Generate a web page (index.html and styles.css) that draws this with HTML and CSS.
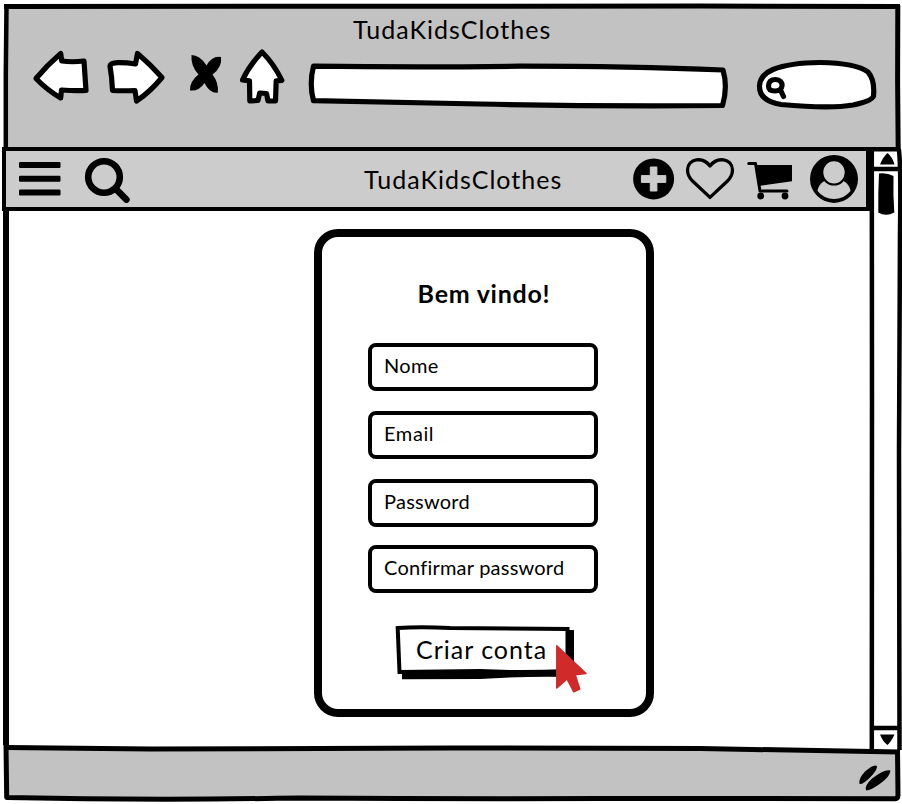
FILE: index.html
```html
<!DOCTYPE html>
<html lang="pt">
<head>
<meta charset="utf-8">
<title>TudaKidsClothes</title>
<link rel="stylesheet" href="styles.css">
</head>
<body>
<div class="window">
  <header class="chrome">
    <svg class="chrome-frame" viewBox="0 0 902 150" aria-hidden="true">
      <path d="M6 6.5 L897.5 6.5 L898 149 L6 149Z" fill="#c2c2c2"/>
      <path d="M4 6.5 L300 6.3 L700 6 L900 6.5" class="line5"/>
      <path d="M6.5 5 L5.8 75 L5.8 150" class="line4"/>
      <path d="M897.8 5 L897.6 80 L898.2 150" class="line5"/>
    </svg>
    <div class="window-title">TudaKidsClothes</div>
    <div class="toolbar">
      <svg class="back" width="60" height="64" viewBox="32 46 60 64"><path class="sketch" d="M36 78.500Q47 65 60.700 53.400L61.700 61Q72 62.500 84 61Q85 76 86 90.500Q74 91 61.500 90L60.700 98Q47 90 36 78.500Z"/></svg>
      <svg class="forward" width="64" height="64" viewBox="104 46 64 64"><path class="sketch" d="M110 66Q110.500 63 118 62.700Q126 62.500 135.500 64L137.500 53.500Q151 65 162 77.500Q150 92 136.500 101L135 90.500Q122 91 112.500 90.500Q112 77 110 66Z"/></svg>
      <svg class="stop" width="40" height="64" viewBox="186 46 40 64"><path d="M191.500 55Q200 55 206.500 65.500Q212 55.500 221 57Q222.500 67 212.500 74.500Q219 83 217.800 92.800Q209.500 93.500 204.500 83Q199 91.500 190 90.500Q189.500 81.500 198.500 74.500Q190.500 66 191.500 55Z"/></svg>
      <svg class="home" width="52" height="64" viewBox="236 46 52 64"><path class="sketch" d="M262 52Q274 64 281.800 80.300L276.200 80.800L275.500 101L268 101L266.500 93.500L259.700 93L258 100.500L249.800 100.800L249.500 80.800L242.500 80Q249 66 262 52Z"/></svg>
      <svg class="address" width="424" height="64" viewBox="306 46 424 64"><path class="sketch" d="M313.500 66.200Q420 67.500 520 66.200Q630 66.200 723 70Q728 87 722.500 105.500Q600 106.500 480 104L313.500 100.700Q309 84 313.500 66.200Z"/></svg>
      <svg class="search" width="126" height="64" viewBox="754 46 126 64"><path class="sketch" d="M773 69.500Q790 62.700 820 62.500Q856 63 868 72Q875 80 873.500 96Q872 101 853 105Q830 109 781 104.500Q759 101 759.500 86Q760 75 773 69.500Z"/><path class="sketch" d="M775.500 79.500C780 79.500 782.500 82.500 782 86C781.500 89.500 779.500 91 775 91C770.500 91 768.500 89.500 768.500 86C768.500 82 771 79.500 775.500 79.500ZM781 91L783.500 96.500"/></svg>
    </div>
  </header>

  <div class="viewport">
    <main class="content">
      <nav class="navbar">
        <svg class="menu" width="44" height="56" viewBox="18 151 44 56"><rect x="19" y="162" width="41.500" height="6" rx="1.200"/><rect x="19" y="175.700" width="41.500" height="6" rx="1.200"/><rect x="19" y="189.500" width="41.500" height="6" rx="1.200"/></svg>
        <svg class="find" width="46" height="56" viewBox="85 151 46 56"><circle cx="104" cy="177" r="15.800" fill="none" stroke="#000" stroke-width="6.600"/><path d="M116 189.200L126.400 199.600" stroke="#000" stroke-width="6.600" stroke-linecap="round"/></svg>
        <span class="brand">TudaKidsClothes</span>
        <div class="actions">
          <svg width="42" height="56" viewBox="633 151 42 56"><circle cx="653.600" cy="178.900" r="20.500"/><path d="M650.300 167h6.600v8.600h8.900v6.800h-8.900v8.600h-6.600v-8.600h-8.900v-6.800h8.900Z" fill="#ccc" stroke="#ccc" stroke-width="1" stroke-linejoin="round"/></svg>
          <svg class="heart" width="49" height="56" viewBox="686 151 49 56"><path d="M710 197.400L692.500 181Q687.500 176 687.500 170C688 158 703 156.500 710 166C717 156.500 732 158 732.500 170Q732.500 176 727.500 181Z" fill="none" stroke="#000" stroke-width="3.300" stroke-linejoin="round"/></svg>
          <svg class="cart" width="46" height="56" viewBox="747 151 46 56"><path d="M756 165H792V181.300L760 185.700Z"/><path d="M748.700 163.500H755.500L760 191H787" fill="none" stroke="#000" stroke-width="3" stroke-linecap="round" stroke-linejoin="round"/><circle cx="760.700" cy="196" r="3.400"/><circle cx="785" cy="196" r="3.400"/></svg>
          <svg class="user" width="49" height="56" viewBox="810 151 49 56"><circle cx="834" cy="178.900" r="24"/><path d="M817.500 191C818 187 821 181.500 826.500 180.500H841.500C847 181.500 850 187 850.500 191A21 21 0 0 1 817.500 191Z" fill="#ccc"/><ellipse cx="834" cy="172.300" rx="11.800" ry="12.200" fill="#ccc" stroke="#000" stroke-width="2.200"/></svg>
        </div>
      </nav>

      <section class="page">
        <form class="card">
          <h1>Bem vindo!</h1>
          <div class="field name">Nome</div>
          <div class="field email">Email</div>
          <div class="field pass">Password</div>
          <div class="field confirm">Confirmar password</div>
          <div class="submit">
            <svg class="submit-shape" viewBox="395 625 182 56" aria-hidden="true"><path d="M402 630H574V677Q520 676 480 679L402 679.300Z"/><path d="M397.700 628Q420 626.500 450 628L567.500 629V671Q520 673 480 671L399.500 672Z" fill="#fff" stroke="#000" stroke-width="4"/></svg>
            <span>Criar conta</span>
            <svg class="cursor" width="32" height="50" viewBox="555 644 32 50"><path d="M556.800 645.800L586 673.500L575.200 674.700L579.700 689L573.800 691.800L567 679L556.800 688Z" fill="#d12a2a" stroke="#d12a2a" stroke-width="1.500" stroke-linejoin="round"/></svg>
          </div>
        </form>
      </section>
    </main>

    <svg class="scrollbar" width="32" height="598" viewBox="870 147 32 598" aria-hidden="true">
      <path d="M872 150H899V750H872Z" fill="#fff"/>
      <path d="M871.800 150L872 400L871.800 749" class="line4"/>
      <path d="M898.800 149Q901 165 900 230L899 450L899.500 750" class="line4"/>
      <path d="M870 149.300H900M872 169H899M872 728H899" class="line4"/>
      <path d="M887.500 153Q892.500 157 894.500 164.500H880Q883 157 887.500 153Z"/>
      <path d="M879 173.500Q887 172.500 893.500 176Q893 195 894.300 212.500Q886 217 878.300 212.500Q878 193 879 173.500Z"/>
      <path d="M880 734.500H894.500Q891 742 887.500 745Q883 742 880 734.500Z"/>
    </svg>
  </div>

  <footer class="statusbar">
    <svg width="902" height="59" viewBox="0 745 902 59" aria-hidden="true">
      <path d="M6 747L300 749.500L600 748.500L898 751.500V798H6Z" fill="#c2c2c2"/>
      <path d="M6 747.500L150 749L450 748L700 748.500L899 752" class="line5"/>
      <path d="M6 745L6.700 797.500Q150 800.500 300 798Q450 799 600 798.500L895 798.700Q898 798.500 898 795L897.500 750" class="line5"/>
      <path d="M859.500 784Q858 779 865 771.500Q874 763.500 877 766Q877.500 770 870 777.500Q862.500 785 859.500 784ZM866 790.500Q864 786 872 778.500Q885 768.500 890.500 770.500Q889.500 777 881 783Q871 790.500 866 790.500Z"/>
    </svg>
  </footer>
</div>
</body>
</html>
```
FILE: styles.css
```css
* { box-sizing: border-box; }

body {
  margin: 0;
  background: #fff;
  color: #000;
  font-family: Lato, "Liberation Sans", sans-serif;
}

svg { display: block; flex: none; overflow: visible; }

.window {
  width: 902px;
  height: 804px;
  display: flex;
  flex-direction: column;
  overflow: hidden;
}

.line4, .line5 { fill: none; stroke: #000; stroke-width: 4.5; stroke-linejoin: round; }
.line5 { stroke-width: 5; }
.sketch { fill: #fff; stroke: #000; stroke-width: 5.2; stroke-linejoin: round; stroke-linecap: round; }

/* Browser chrome */
.chrome { position: relative; height: 147px; flex: none; }
.chrome-frame { position: absolute; inset: 0; width: 902px; height: 150px; }
.window-title {
  position: relative;
  height: 46px;
  padding: 13px 0 0 353px;
  font-size: 25px;
  line-height: 32px;
  letter-spacing: 1.03px;
  white-space: nowrap;
}
.toolbar { position: relative; display: flex; padding-left: 32px; }
.forward { margin-left: 12px; }
.stop { margin-left: 18px; }
.home { margin-left: 10px; }
.address { margin-left: 18px; }
.search { margin-left: 24px; }

/* Viewport */
.viewport { position: relative; display: flex; height: 598px; flex: none; }
.content { width: 870px; padding-left: 2px; display: flex; flex-direction: column; }
.navbar {
  height: 64px;
  border: 4px solid #000;
  background: #ccc;
  display: flex;
  padding: 0 8px 0 12px;
}
.find { margin-left: 23px; }
.brand {
  margin-left: 233px;
  font-size: 25px;
  line-height: 56px;
  letter-spacing: 1.03px;
  white-space: nowrap;
}
.actions { display: flex; margin-left: auto; }
.heart { margin-left: 11px; }
.cart { margin-left: 12px; }
.user { margin-left: 17px; margin-right: -1px; }

.page {
  flex: 1;
  margin-left: 1px;
  border-left: 6px solid #000;
  padding: 18px 0 0 305px;
}
.card {
  width: 340px;
  height: 488px;
  border: 8px solid #000;
  border-radius: 24px;
  padding: 40px 48px 0 46px;
  display: flex;
  flex-direction: column;
}
h1 {
  margin: 0 0 34px;
  height: 32px;
  font-size: 25px;
  line-height: 32px;
  font-weight: 700;
  letter-spacing: 0.75px;
  text-align: center;
  text-indent: 2px;
  white-space: nowrap;
}
.field {
  height: 48px;
  flex: none;
  margin-bottom: 20px;
  border: 4px solid #000;
  border-radius: 8px;
  padding-left: 12px;
  font-size: 20px;
  line-height: 36px;
  white-space: nowrap;
}
.name { letter-spacing: 0.3px; }
.email { letter-spacing: 0.6px; }
.pass { margin-bottom: 18px; letter-spacing: 0.25px; }
.confirm { letter-spacing: 0.22px; font-variant-ligatures: common-ligatures; }
.submit {
  position: relative;
  width: 182px;
  height: 56px;
  margin: 12px 0 0 27px;
  padding-left: 21px;
  font-size: 25px;
  line-height: 48px;
  letter-spacing: 1px;
  white-space: nowrap;
}
.submit span { position: relative; }
.submit-shape { position: absolute; inset: 0; }
.cursor { position: absolute; left: 160px; top: 19px; }

/* Status bar */
.statusbar { position: relative; height: 59px; flex: none; }
```
